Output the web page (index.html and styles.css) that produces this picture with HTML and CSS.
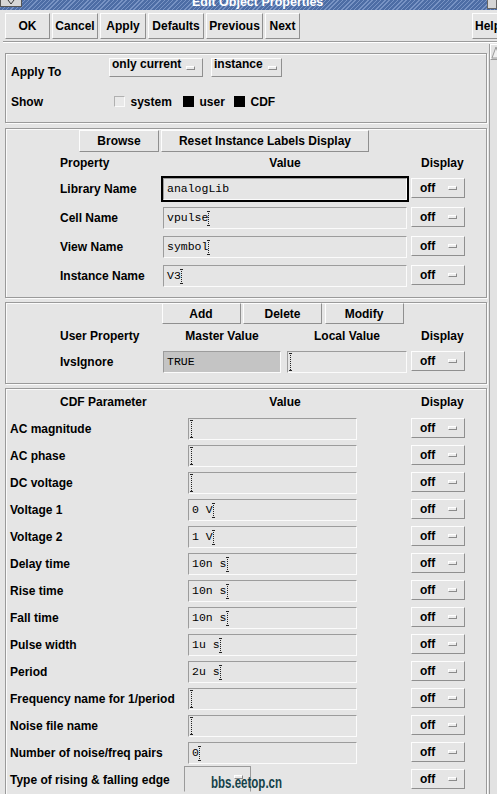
FILE: index.html
```html
<!DOCTYPE html>
<html>
<head>
<meta charset="utf-8">
<title>Edit Object Properties</title>
<link rel="stylesheet" href="styles.css">
</head>
<body>
<div class="titlebar">
  <div class="tb-menu"><svg width="20" height="6" viewBox="0 0 20 6"><path d="M7 0 L10 4 L13 0" fill="none" stroke="#333" stroke-width="1"/></svg></div>
  <div class="tb-title">Edit Object Properties</div>
  <div class="tb-btn"></div>
</div>
<div class="toolbar">
  <div class="btn w-ok">OK</div>
  <div class="btn w-cancel">Cancel</div>
  <div class="btn w-apply">Apply</div>
  <div class="btn w-defaults">Defaults</div>
  <div class="btn w-prev">Previous</div>
  <div class="btn w-next">Next</div>
  <div class="btn w-help">Help</div>
</div>
<div class="sep"></div>
<div class="main">
  <div class="content">
    <section class="panel p1">
      <div class="p1-row r1">
        <div class="p1-label lbl-apply">Apply To</div>
        <div class="cyc cyc-only"><span>only current</span><i class="ind"></i></div>
        <div class="cyc cyc-inst"><span>instance</span><i class="ind"></i></div>
      </div>
      <div class="p1-row r2">
        <div class="p1-label">Show</div>
        <div class="toggle t-sys"><i class="box"></i><span>system</span></div>
        <div class="toggle t-user"><i class="box on"></i><span>user</span></div>
        <div class="toggle t-cdf"><i class="box on"></i><span>CDF</span></div>
      </div>
    </section>

    <section class="panel p2">
      <div class="g2 btnrow">
        <div class="btn b-browse">Browse</div>
        <div class="btn b-reset">Reset Instance Labels Display</div>
      </div>
      <div class="g2 hdr">
        <div>Property</div><div class="c">Value</div><div class="dh">Display</div>
      </div>
      <div class="g2 row first">
        <div class="lbl">Library Name</div>
        <div class="fw focus"><div class="field"><span>analogLib</span></div></div>
        <div class="off">off<i class="ind"></i></div>
      </div>
      <div class="g2 row">
        <div class="lbl">Cell Name</div>
        <div class="fw"><div class="field"><span>vpulse</span><i class="caret"></i></div></div>
        <div class="off">off<i class="ind"></i></div>
      </div>
      <div class="g2 row">
        <div class="lbl">View Name</div>
        <div class="fw"><div class="field"><span>symbol</span><i class="caret"></i></div></div>
        <div class="off">off<i class="ind"></i></div>
      </div>
      <div class="g2 row">
        <div class="lbl">Instance Name</div>
        <div class="fw"><div class="field"><span>V3</span><i class="caret"></i></div></div>
        <div class="off">off<i class="ind"></i></div>
      </div>
    </section>

    <section class="panel p3">
      <div class="btnrow3">
        <div class="btn b-sm">Add</div>
        <div class="btn b-sm">Delete</div>
        <div class="btn b-sm">Modify</div>
      </div>
      <div class="g3 hdr">
        <div>User Property</div><div class="c">Master Value</div><div class="c">Local Value</div><div class="dh">Display</div>
      </div>
      <div class="g3 row">
        <div class="lbl">IvsIgnore</div>
        <div class="fw"><div class="field ro"><span>TRUE</span></div></div>
        <div class="fw"><div class="field"><i class="caret empty"></i></div></div>
        <div class="off">off<i class="ind"></i></div>
      </div>
    </section>

    <section class="panel p4">
      <div class="g2 hdr">
        <div>CDF Parameter</div><div class="c">Value</div><div class="dh">Display</div>
      </div>
      <div class="g4 row"><div class="lbl">AC magnitude</div><div class="fw"><div class="field"><i class="caret empty"></i></div></div><div></div><div class="off">off<i class="ind"></i></div></div>
      <div class="g4 row"><div class="lbl">AC phase</div><div class="fw"><div class="field"><i class="caret empty"></i></div></div><div></div><div class="off">off<i class="ind"></i></div></div>
      <div class="g4 row"><div class="lbl">DC voltage</div><div class="fw"><div class="field"><i class="caret empty"></i></div></div><div></div><div class="off">off<i class="ind"></i></div></div>
      <div class="g4 row"><div class="lbl">Voltage 1</div><div class="fw"><div class="field"><span>0 V</span><i class="caret"></i></div></div><div></div><div class="off">off<i class="ind"></i></div></div>
      <div class="g4 row"><div class="lbl">Voltage 2</div><div class="fw"><div class="field"><span>1 V</span><i class="caret"></i></div></div><div></div><div class="off">off<i class="ind"></i></div></div>
      <div class="g4 row"><div class="lbl">Delay time</div><div class="fw"><div class="field"><span>10n s</span><i class="caret"></i></div></div><div></div><div class="off">off<i class="ind"></i></div></div>
      <div class="g4 row"><div class="lbl">Rise time</div><div class="fw"><div class="field"><span>10n s</span><i class="caret"></i></div></div><div></div><div class="off">off<i class="ind"></i></div></div>
      <div class="g4 row"><div class="lbl">Fall time</div><div class="fw"><div class="field"><span>10n s</span><i class="caret"></i></div></div><div></div><div class="off">off<i class="ind"></i></div></div>
      <div class="g4 row"><div class="lbl">Pulse width</div><div class="fw"><div class="field"><span>1u s</span><i class="caret"></i></div></div><div></div><div class="off">off<i class="ind"></i></div></div>
      <div class="g4 row"><div class="lbl">Period</div><div class="fw"><div class="field"><span>2u s</span><i class="caret"></i></div></div><div></div><div class="off">off<i class="ind"></i></div></div>
      <div class="g4 row"><div class="lbl">Frequency name for 1/period</div><div class="fw"><div class="field"><i class="caret empty"></i></div></div><div></div><div class="off">off<i class="ind"></i></div></div>
      <div class="g4 row"><div class="lbl">Noise file name</div><div class="fw"><div class="field"><i class="caret empty"></i></div></div><div></div><div class="off">off<i class="ind"></i></div></div>
      <div class="g4 row"><div class="lbl">Number of noise/freq pairs</div><div class="fw"><div class="field"><span>0</span><i class="caret"></i></div></div><div></div><div class="off">off<i class="ind"></i></div></div>
      <div class="g4 row"><div class="lbl">Type of rising &amp; falling edge</div><div class="typebox"><i class="ind"></i></div><div></div><div class="off">off<i class="ind"></i></div></div>
    </section>
  </div>
  <div class="vscroll">
    <div class="arrow"><svg width="10" height="15" viewBox="0 0 10 15"><path d="M1 13 L5 2 L9 13 Z" fill="#efefef" stroke="#9a9a9a" stroke-width="1"/></svg></div>
  </div>
</div>
<div class="watermark">bbs.eetop.cn</div>
</body>
</html>
```

FILE: styles.css
```css
* { box-sizing: border-box; }
html, body { margin: 0; padding: 0; overflow: hidden; }
body {
  width: 497px;
  height: 794px;
  position: relative;
  background: #e5e5e5;
  color: #000;
  font: bold 12px "Liberation Sans", Arial, sans-serif;
}

/* title bar */
.titlebar {
  height: 10px;
  display: flex;
  overflow: hidden;
  background: repeating-linear-gradient(135deg, #4d6da5 0 2px, #7893c4 2px 3px);
}
.tb-menu {
  width: 22px;
  height: 7px;
  background: #d6d6d6;
  border: 1px solid #555;
  border-top: none;
  flex: none;
}
.tb-menu svg { display: block; }
.tb-title {
  color: #fff;
  font-size: 12.5px;
  line-height: 12px;
  margin-top: -4px;
  margin-left: 170px;
  white-space: nowrap;
}
.tb-btn {
  margin-left: auto;
  width: 10px;
  height: 9px;
  background: #d6d6d6;
  border: 1px solid #666;
  border-top: none;
}

/* buttons */
.btn {
  height: 22px;
  background: #e5e5e5;
  border: 1px solid;
  border-color: #fdfdfd #8f8f8f #8f8f8f #fdfdfd;
  display: flex;
  align-items: center;
  justify-content: center;
  white-space: nowrap;
}

.toolbar {
  height: 31px;
  padding: 3px 0 0 5px;
  display: flex;
  gap: 2px;
}
.toolbar .btn { height: 26px; }
.w-ok { width: 45px; }
.w-cancel { width: 46px; }
.w-apply { width: 46px; }
.w-defaults { width: 56px; }
.w-prev { width: 57px; }
.w-next { width: 35px; }
.w-help {
  width: 37px;
  margin-left: auto;
  margin-right: -12px;
  justify-content: flex-start;
  padding-left: 2px;
}

.sep {
  height: 2px;
  margin-left: 3px;
  border-top: 1px solid #9a9a9a;
  border-bottom: 1px solid #fff;
}

/* main scroll area */
.main {
  display: flex;
  height: 751px;
}
.content {
  width: 489px;
  flex: none;
  padding-top: 10px;
}
.vscroll {
  width: 8px;
  margin-top: 1px;
  border-left: 1px solid #9a9a9a;
  background: #e2e2e2;
  overflow: hidden;
}
.vscroll .arrow {
  width: 10px;
  height: 16px;
  border-top: 1px solid #fff;
  border-left: 1px solid #fff;
  border-bottom: 1px solid #9a9a9a;
}
.vscroll svg { display: block; }

/* panels */
.panel {
  margin-left: 5px;
  width: 482px;
  border: 1px solid #9a9a9a;
  box-shadow: 1px 1px 0 #fbfbfb, inset 1px 1px 0 #fbfbfb;
}
.p1 { height: 70px; padding: 4px 0 0 5px; }
.p2 { margin-top: 5px; padding-bottom: 8px; }
.p3 { margin-top: 4px; padding-bottom: 8px; }
.p4 { margin-top: 4px; padding-bottom: 8px; }

/* panel 1 */
.p1-row { display: flex; height: 29px; }
.r1 { align-items: flex-start; }
.r2 { align-items: center; }
.p1-label { width: 98px; line-height: 14px; flex: none; }
.lbl-apply { margin-top: 7px; }

.cyc {
  height: 19px;
  display: flex;
  align-items: flex-start;
  padding-left: 2px;
  border: 1px solid;
  border-color: #fdfdfd #8f8f8f #8f8f8f #fdfdfd;
  flex: none;
}
.cyc span { line-height: 12px; margin-top: -1px; white-space: nowrap; }
.cyc .ind { align-self: center; margin-left: auto; }
.cyc-only { width: 94px; }
.cyc-only .ind { margin-right: 7px; }
.cyc-inst { width: 71px; margin-left: 8px; }
.cyc-inst .ind { margin-right: 4px; }

.ind {
  display: block;
  width: 9px;
  height: 4px;
  background: #ececec;
  border: 1px solid;
  border-color: #fff #8a8a8a #8a8a8a #fff;
  flex: none;
}

.toggle { display: flex; align-items: center; flex: none; line-height: 14px; }
.toggle .box {
  display: block;
  width: 11px;
  height: 11px;
  margin-right: 5.5px;
  background: #e9e9e9;
  border: 1px solid;
  border-color: #b0b0b0 #fafafa #fafafa #b0b0b0;
}
.toggle .box.on { background: #000; border-color: #000; }
.t-sys { width: 69px; margin-left: 5px; }
.t-user { width: 51px; }

/* grids */
.g2 {
  display: grid;
  grid-template-columns: 99px 248px 54px;
  column-gap: 2px;
  padding-left: 54px;
}
.g3 {
  display: grid;
  grid-template-columns: 99px 122px 124px 54px;
  column-gap: 2px;
  padding-left: 54px;
}
.g4 {
  display: grid;
  grid-template-columns: 174px 173px 48px 54px;
  column-gap: 2px;
  padding-left: 4px;
}

.btnrow { height: 22px; margin-top: 1px; }
.b-browse { width: 80px; justify-self: end; }
.b-reset { width: 208px; justify-self: start; }

.btnrow3 {
  display: flex;
  gap: 2.5px;
  height: 21px;
  padding-left: 155.5px;
}
.b-sm { width: 79px; height: 21px; }

.hdr { align-items: center; line-height: 14px; }
.hdr .c { text-align: center; }
.hdr .dh { padding-left: 10px; }
.p2 .hdr { height: 22px; }
.p3 .hdr { height: 24px; }
.p4 .hdr { height: 26px; }

.row { height: 26px; line-height: 14px; }
.lbl { align-self: center; white-space: nowrap; }
.p2 .row { margin-top: 3px; }
.p2 .row.first { margin-top: 2px; }
.p3 .row { margin-top: 1px; }
.p4 .row { margin-top: 1px; }

.fw {
  height: 26px;
  border: 2px solid transparent;
}
.fw.focus { border-color: #000; }
.field {
  height: 22px;
  border: 1px solid;
  border-color: #9c9c9c #fbfbfb #fbfbfb #9c9c9c;
  padding-left: 3px;
  display: flex;
  align-items: center;
  font: normal 11.5px "Liberation Mono", "Courier New", monospace;
  white-space: pre;
  overflow: hidden;
}
.field span { margin-top: -2px; }
.field.ro { background: #c4c4c4; }

.caret {
  display: block;
  width: 3px;
  height: 15px;
  margin-left: -1px;
  flex: none;
  background:
    linear-gradient(#222, #222) 0 0 / 3px 1px no-repeat,
    linear-gradient(#222, #222) 0 100% / 3px 1px no-repeat,
    repeating-linear-gradient(to bottom, #222 0 1px, transparent 1px 2px) 1px 0 / 1px 100% no-repeat;
}
.caret.empty { height: 18px; margin-left: -2px; }

.off {
  height: 20px;
  margin-top: 2px;
  align-self: start;
  display: flex;
  align-items: center;
  padding-left: 8px;
  border: 1px solid;
  border-color: #fdfdfd #8f8f8f #8f8f8f #fdfdfd;
}
.off .ind { margin-left: auto; margin-right: 7px; }

.typebox {
  width: 67px;
  height: 26px;
  margin-left: -2px;
  margin-top: -1px;
  border: 1px solid;
  border-color: #9a9a9a #9a9a9a transparent #9a9a9a;
  display: flex;
  align-items: flex-start;
}
.typebox .ind { margin-left: auto; margin-right: 7px; margin-top: 8px; }

/* watermark overlay */
.watermark {
  position: absolute;
  left: 211px;
  top: 775px;
  font: bold 16px "Liberation Sans", Arial, sans-serif;
  line-height: 16px;
  color: #15424a;
  transform: scaleX(0.72);
  transform-origin: 0 0;
  white-space: nowrap;
}
```
